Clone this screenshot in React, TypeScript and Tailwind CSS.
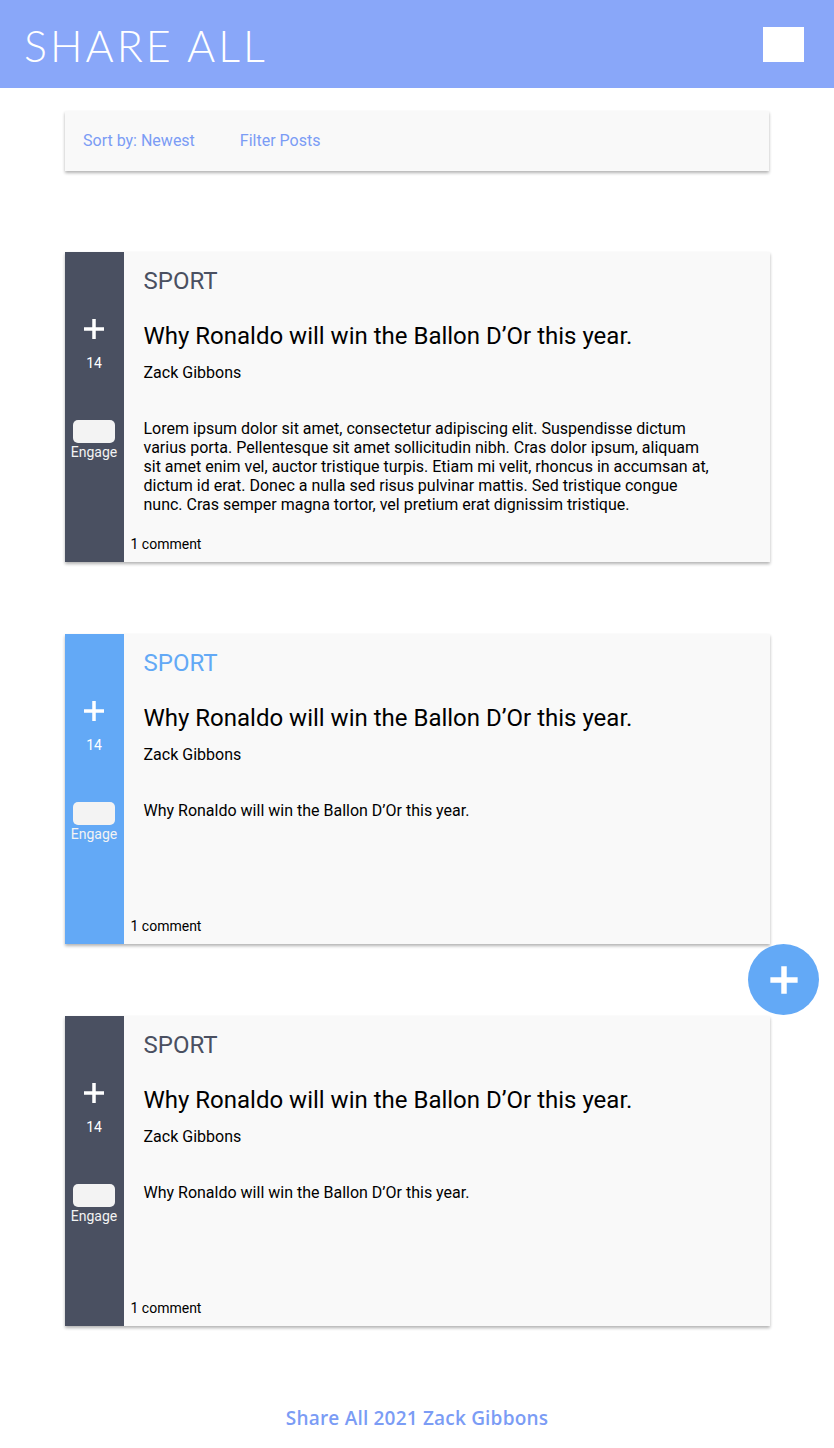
import React from "react";

function Plus({ size = 22, stroke = 3.5 }: { size?: number; stroke?: number }) {
  return (
    <svg width={size} height={size} viewBox="0 0 22 22">
      <path d="M11 1v20M1 11h20" stroke="white" strokeWidth={stroke} />
    </svg>
  );
}

const lorem =
  "Lorem ipsum dolor sit amet, consectetur adipiscing elit. Suspendisse dictum varius porta. Pellentesque sit amet sollicitudin nibh. Cras dolor ipsum, aliquam sit amet enim vel, auctor tristique turpis. Etiam mi velit, rhoncus in accumsan at, dictum id erat. Donec a nulla sed risus pulvinar mattis. Sed tristique congue nunc. Cras semper magna tortor, vel pretium erat dignissim tristique.";

function PostCard({ active, body }: { active?: boolean; body: string }) {
  return (
    <div className="flex h-[310px] w-[705px] bg-[#f9f9f9] shadow-[0_2px_3px_rgba(0,0,0,0.3)]">
      <div
        className={`flex w-[59px] shrink-0 flex-col items-center pt-[66px] text-white ${
          active ? "bg-[#63a9f6]" : "bg-[#4a5061]"
        }`}
      >
        <Plus />
        <span className="mt-[15px] text-[14px] leading-[16px]">14</span>
        <div className="mt-[49px] h-[23px] w-[42px] rounded-[5px] bg-[#f3f3f3]" />
        <span className="mt-px text-[14px] leading-[17px] text-[#f3f3f3]">Engage</span>
      </div>
      <div className="flex flex-1 flex-col">
        <div className="pl-[20px] pt-[15px]">
          <div
            className={`text-[24px] leading-[28px] ${
              active ? "text-[#63a9f6]" : "text-[#4a5061]"
            }`}
          >
            SPORT
          </div>
          <div className="mt-[27px] text-[24px] leading-[28px] text-black">
            Why Ronaldo will win the Ballon D’Or this year.
          </div>
          <div className="mt-[13px] text-[16px] leading-[19px] text-black">Zack Gibbons</div>
          <p className="mt-[37px] w-[572px] text-[16px] leading-[19px] text-black">{body}</p>
        </div>
        <div className="mt-auto pb-[10px] pl-[7px] text-[14px] leading-[16px] text-black">
          1 comment
        </div>
      </div>
    </div>
  );
}

export default function App() {
  return (
    <div className="relative min-h-[1448px] bg-white font-['Roboto',sans-serif]">
      <header className="flex h-[88px] items-center justify-between bg-[#89a7f9] pl-[24px] pr-[30px]">
        <h1 className="mt-[4px] font-['Lato',sans-serif] text-[43px] font-light tracking-[3px] text-white">
          SHARE ALL
        </h1>
        <div className="h-[35px] w-[41px] bg-white" />
      </header>

      <div className="mx-auto mt-[23px] flex h-[60px] w-[704px] items-center gap-[45px] bg-[#f9f9f9] pl-[18px] text-[16px] text-[#7b9cf5] shadow-[0_2px_3px_rgba(0,0,0,0.3)]">
        <span>Sort by: Newest</span>
        <span>Filter Posts</span>
      </div>

      <div className="mt-[81px] flex flex-col items-center gap-[72px]">
        <PostCard body={lorem} />
        <PostCard active body="Why Ronaldo will win the Ballon D’Or this year." />
        <PostCard body="Why Ronaldo will win the Ballon D’Or this year." />
      </div>

      <button className="absolute left-[748px] top-[944px] flex h-[71px] w-[71px] items-center justify-center rounded-full bg-[#63a9f6]">
        <Plus size={30} stroke={4} />
      </button>

      <footer className="mt-[78px] text-center font-['Open_Sans',sans-serif] text-[19px] font-semibold tracking-[0.2px] text-[#7b9cf5]">
        Share All 2021 Zack Gibbons
      </footer>
    </div>
  );
}
